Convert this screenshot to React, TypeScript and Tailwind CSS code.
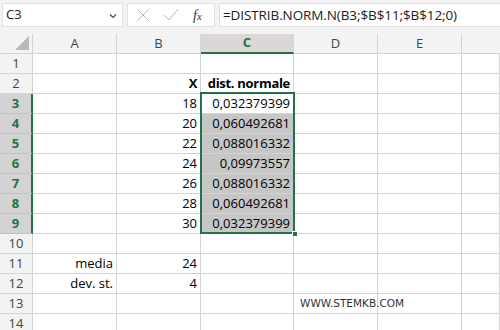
import React from "react";

const cols = [
  { k: "A", w: "w-[84px]" },
  { k: "B", w: "w-[84px]" },
  { k: "C", w: "w-[93px]" },
  { k: "D", w: "w-[84px]" },
  { k: "E", w: "w-[84px]" },
  { k: "F", w: "flex-1" },
];

type Cell = { t: string; b?: boolean };
const data: Record<number, Record<string, Cell>> = {
  2: { B: { t: "X", b: true }, C: { t: "dist. normale", b: true } },
  3: { B: { t: "18" }, C: { t: "0,032379399" } },
  4: { B: { t: "20" }, C: { t: "0,060492681" } },
  5: { B: { t: "22" }, C: { t: "0,088016332" } },
  6: { B: { t: "24" }, C: { t: "0,09973557" } },
  7: { B: { t: "26" }, C: { t: "0,088016332" } },
  8: { B: { t: "28" }, C: { t: "0,060492681" } },
  9: { B: { t: "30" }, C: { t: "0,032379399" } },
  11: { A: { t: "media" }, B: { t: "24" } },
  12: { A: { t: "dev. st." }, B: { t: "4" } },
};

const rows = Array.from({ length: 14 }, (_, i) => i + 1);
const cellFont = { fontFamily: '"Open Sans", "Liberation Sans", sans-serif' };
const uiFont = { fontFamily: '"Open Sans", "Noto Sans", sans-serif' };

export default function App() {
  return (
    <div className="w-[500px] h-[330px] overflow-hidden bg-white relative" style={uiFont}>
      {/* formula bar */}
      <div className="h-[34px] bg-[#f3f3f3] flex items-start pt-[3px] gap-[4px] pl-[2px]">
        <div className="w-[121px] h-[24px] bg-white border border-[#e1e1e1] flex items-center justify-between pl-[3px] pr-[5px]">
          <span className="text-[13px] text-[#222]">C3</span>
          <svg width="8" height="6" viewBox="0 0 8 6" className="mt-[2px]">
            <path d="M1 1.5 L4 4.5 L7 1.5" fill="none" stroke="#444" strokeWidth="1.1" />
          </svg>
        </div>
        <div className="w-[88px] h-[24px] bg-white border border-[#e1e1e1] flex items-center">
          <svg width="14" height="14" viewBox="0 0 14 14" className="ml-[8px]">
            <path d="M1 1 L13 13 M13 1 L1 13" stroke="#b8b8b8" strokeWidth="1" fill="none" />
          </svg>
          <svg width="16" height="14" viewBox="0 0 16 14" className="ml-[13px]">
            <path d="M1 7 L6 12 L15 1" stroke="#b8b8b8" strokeWidth="1" fill="none" />
          </svg>
          <span
            className="ml-[14px] text-[14px] italic text-[#333]"
            style={{ fontFamily: '"Liberation Serif", serif' }}
          >
            f<span className="text-[11px]">x</span>
          </span>
        </div>
        <div className="flex-1 h-[24px] bg-white border border-[#e1e1e1] border-r-0 flex items-center pl-[3px]">
          <span className="text-[13.5px] text-[#222] tracking-[-0.1px] whitespace-nowrap">
            =DISTRIB.NORM.N(B3;$B$11;$B$12;0)
          </span>
        </div>
      </div>

      {/* column headers */}
      <div className="flex h-[20px] bg-[#f3f3f3] border-b border-[#d4d4d4] text-[13px] text-[#444]">
        <div className="w-[33px] shrink-0 relative border-r border-[#d4d4d4]">
          <div
            className="absolute right-[3px] bottom-[3px] w-[14px] h-[14px] bg-[#b9b9b9]"
            style={{ clipPath: "polygon(100% 0, 100% 100%, 0 100%)" }}
          />
        </div>
        {cols.map((c) => (
          <div
            key={c.k}
            className={`${c.w} shrink-0 flex items-center justify-center ${
              c.k === "C"
                ? "bg-[#dcd6d6] border-b-2 border-b-[#217346] text-[#217346] font-bold border-r border-r-[#d4d4d4] -mb-px"
                : c.k === "F"
                ? ""
                : "border-r border-[#d4d4d4]"
            }`}
          >
            {c.k !== "F" ? c.k : ""}
          </div>
        ))}
      </div>

      {/* rows */}
      {rows.map((r) => {
        const sel = r >= 3 && r <= 9;
        return (
          <div key={r} className="flex h-[20px]">
            <div
              className={`w-[33px] shrink-0 flex items-center justify-center text-[13px] leading-none border-b ${
                sel
                  ? "bg-[#d3d3d3] text-[#217346] font-bold border-b-[#c2c2c2] border-r-2 border-r-[#217346]"
                  : "bg-[#f3f3f3] text-[#444] border-b-[#d4d4d4] border-r border-r-[#d4d4d4]"
              }`}
            >
              {r}
            </div>
            {cols.map((c) => {
              const cell = data[r]?.[c.k];
              const gray = c.k === "C" && r >= 4 && r <= 9;
              const isWww = r === 13 && c.k === "D";
              return (
                <div
                  key={c.k}
                  className={`${c.w} shrink-0 border-b border-r border-[#d4d4d4] flex items-center justify-end pr-[3px] text-[13px] text-black whitespace-nowrap leading-none ${
                    gray ? "bg-[#c6c6c6]" : ""
                  } ${cell?.b ? "font-bold tracking-[-0.3px]" : ""} ${
                    isWww ? "overflow-visible relative" : "overflow-hidden"
                  }`}
                  style={cellFont}
                >
                  {cell ? cell.t : ""}
                  {isWww && (
                    <span
                      className="absolute left-[6px] top-[4px] text-[10.5px] leading-none text-[#333] whitespace-nowrap"
                      style={{ fontFamily: '"DejaVu Sans", sans-serif' }}
                    >
                      WWW.STEMKB.COM
                    </span>
                  )}
                </div>
              );
            })}
          </div>
        );
      })}

      {/* selection overlay */}
      <div className="absolute left-[200px] top-[92px] w-[95px] h-[142px] border-2 border-[#217346] pointer-events-none" />
      <div className="absolute left-[292px] top-[231px] w-[6px] h-[6px] bg-[#217346] border border-white pointer-events-none" />
    </div>
  );
}
